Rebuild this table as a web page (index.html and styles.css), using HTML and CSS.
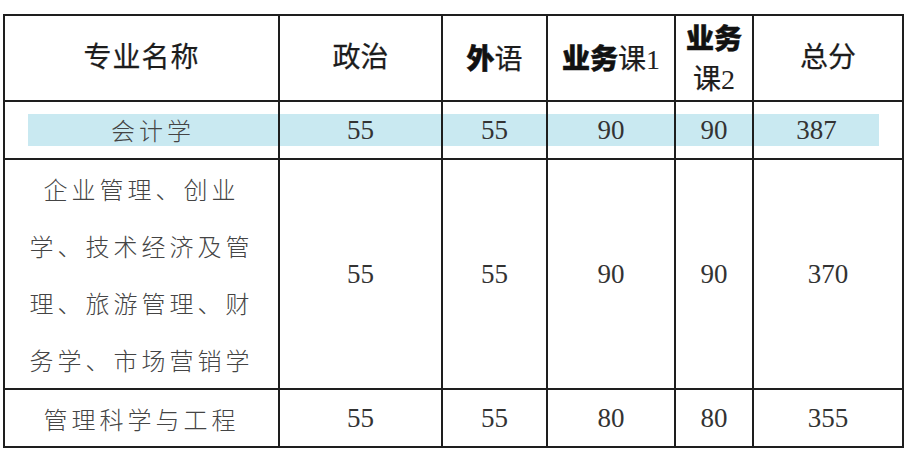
FILE: index.html
```html
<!DOCTYPE html>
<html lang="zh-CN">
<head>
<meta charset="utf-8">
<title>分数线</title>
<link rel="stylesheet" href="styles.css">
</head>
<body>
<div class="page">
  <table class="score">
    <colgroup>
      <col class="c1"><col class="c2"><col class="c3"><col class="c4"><col class="c5"><col class="c6">
    </colgroup>
    <thead>
      <tr class="head">
        <th>专业名称</th>
        <th>政治</th>
        <th><b class="heavy">外</b>语</th>
        <th><b class="heavy">业务</b>课<span class="num">1</span></th>
        <th class="two"><b class="heavy">业务</b><br>课<span class="num">2</span></th>
        <th>总分</th>
      </tr>
    </thead>
    <tbody>
      <tr class="hl">
        <td class="name"><div class="band first">会计学</div></td>
        <td><div class="band">55</div></td>
        <td><div class="band">55</div></td>
        <td><div class="band">90</div></td>
        <td><div class="band">90</div></td>
        <td><div class="band last">387</div></td>
      </tr>
      <tr class="tall">
        <td class="name multi">企业管理、创业<br>学、技术经济及管<br>理、旅游管理、财<br>务学、市场营销学</td>
        <td>55</td>
        <td>55</td>
        <td>90</td>
        <td>90</td>
        <td>370</td>
      </tr>
      <tr class="row">
        <td class="name">管理科学与工程</td>
        <td>55</td>
        <td>55</td>
        <td>80</td>
        <td>80</td>
        <td>355</td>
      </tr>
    </tbody>
  </table>
</div>
</body>
</html>
```

FILE: styles.css
```css
html, body {
  margin: 0;
  padding: 0;
  background: #ffffff;
}

.page {
  padding: 14px 0 0 3px;
}

.score {
  border-collapse: collapse;
  table-layout: fixed;
  width: 899px;
  font-family: "Liberation Serif", "Noto Sans CJK SC", serif;
  color: #333333;
}

.c1 { width: 275px; }
.c2 { width: 163px; }
.c3 { width: 105px; }
.c4 { width: 128px; }
.c5 { width: 78px; }
.c6 { width: 150px; }

.score th,
.score td {
  border: 2px solid #1e1e1e;
  text-align: center;
  vertical-align: middle;
  padding: 0;
}

.score .head th {
  height: 84px;
  font-size: 28px;
  font-weight: 400;
  color: #1c1c1c;
  line-height: 40px;
  -webkit-text-stroke: 0.25px #1c1c1c;
}

.score .head th:first-child {
  letter-spacing: 1px;
}

.score .head .num {
  -webkit-text-stroke: 0;
  color: #222222;
}

.score .head .heavy {
  font-family: "Noto Sans CJK SC", sans-serif;
  font-weight: 900;
  color: #111111;
  -webkit-text-stroke: 0.5px #111111;
}

.score td {
  font-size: 27px;
  font-weight: 400;
  color: #333333;
}

.score .hl td {
  height: 56px;
}

.band {
  background: #c9e9f1;
  height: 32px;
  line-height: 32px;
}

.band.first {
  margin-left: 23px;
}

.band.last {
  margin-right: 23px;
}

.score .name {
  font-family: "Noto Sans CJK SC", sans-serif;
  font-weight: 300;
  font-size: 24px;
  letter-spacing: 4px;
  color: #444444;
}

.score .tall td {
  height: 227px;
}

.score .multi {
  line-height: 57px;
}

.score .row td {
  height: 56px;
}
```
